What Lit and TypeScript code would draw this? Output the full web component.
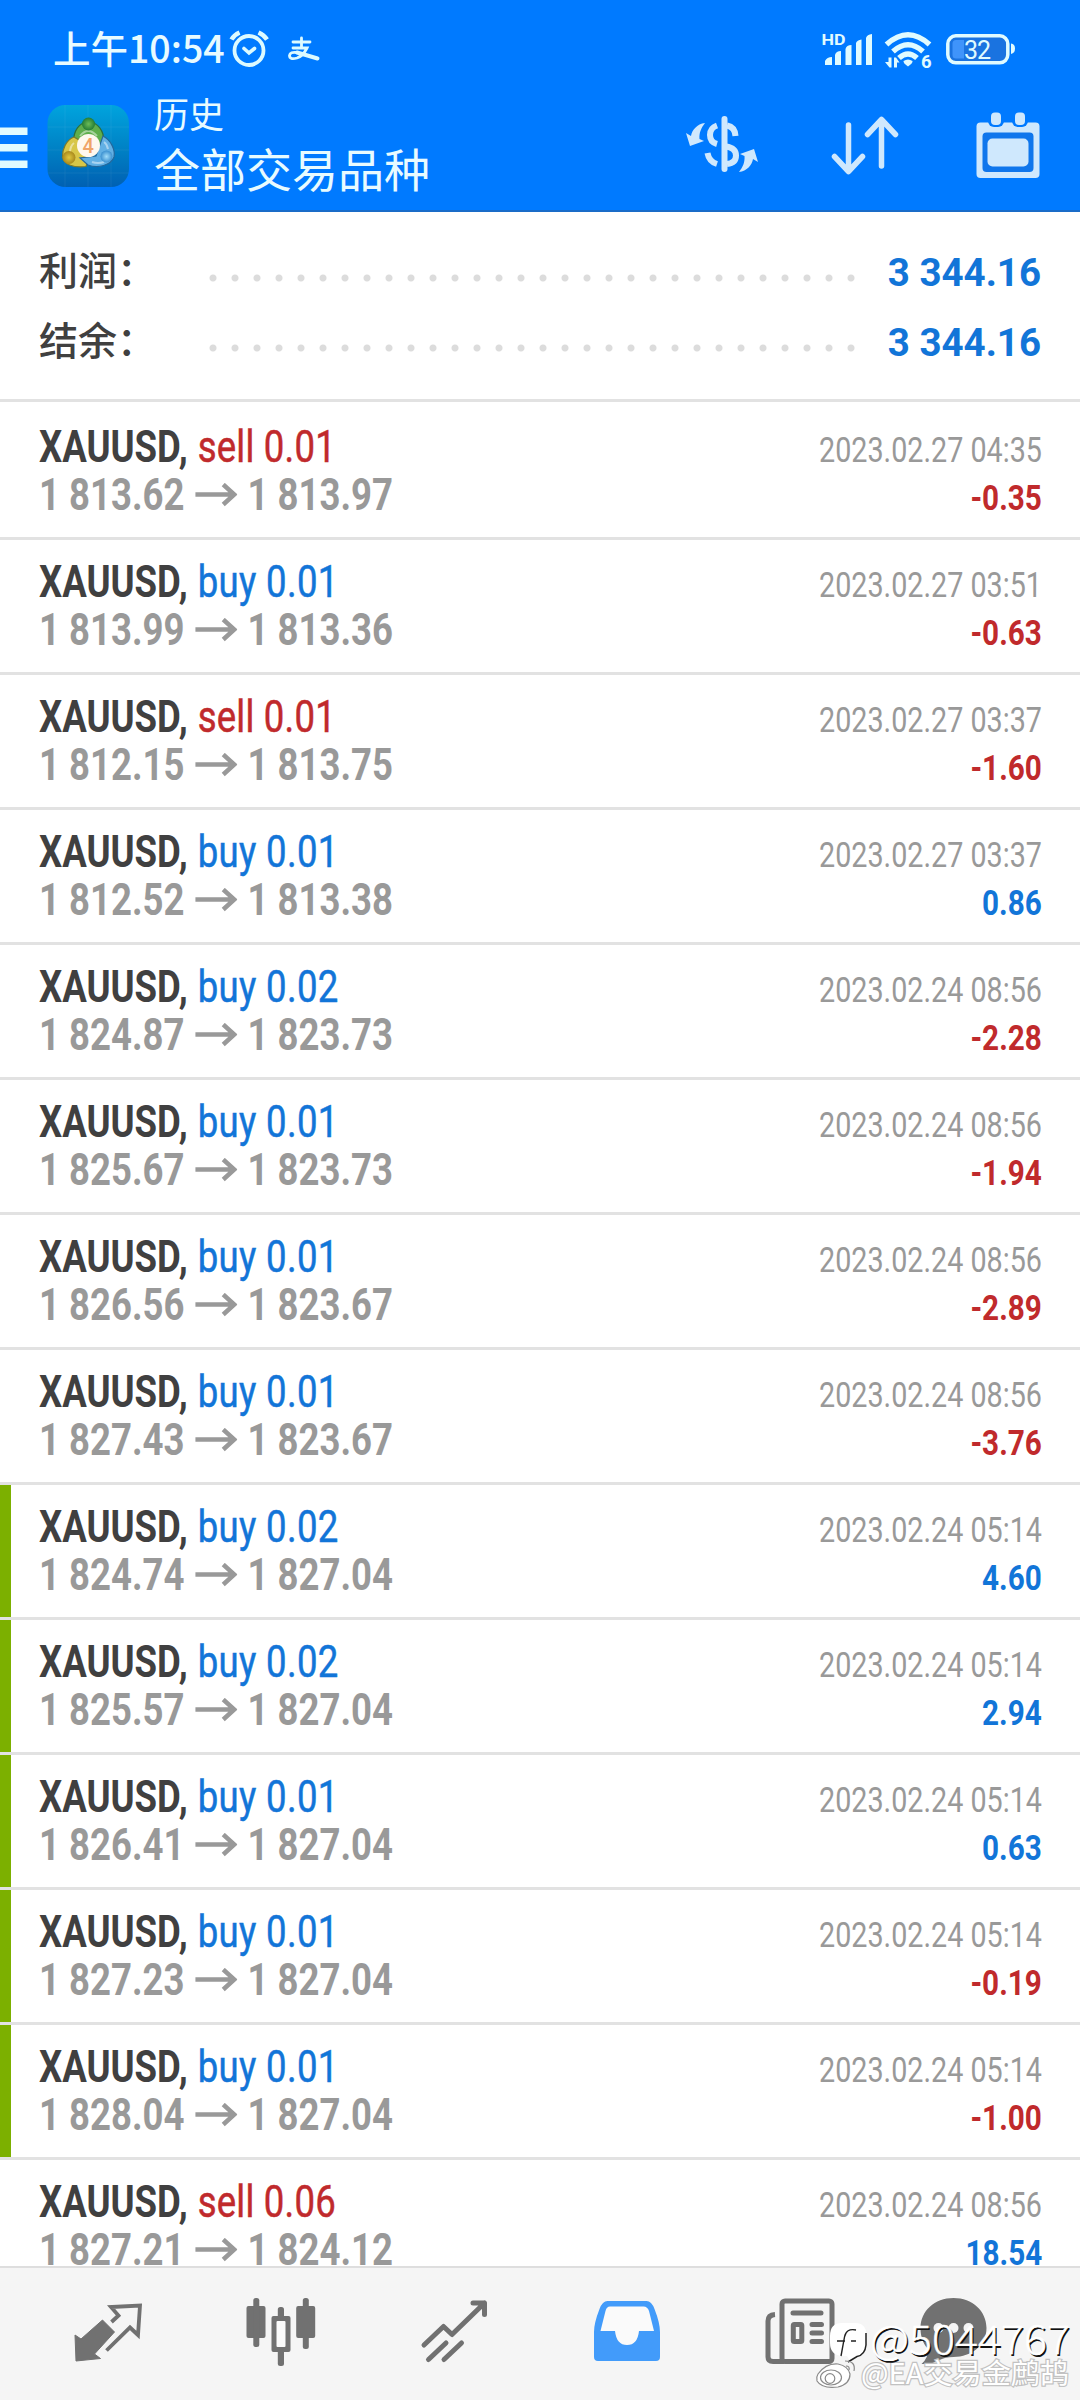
import { LitElement, html, css, svg } from "lit";
import { customElement, property } from "lit/decorators.js";

interface Deal {
  side: "buy" | "sell";
  volume: string;
  open: string;
  close: string;
  time: string;
  profit: string;
  marked?: boolean;
}

const deal = (
  side: "buy" | "sell", volume: string, open: string, close: string,
  time: string, profit: string, marked = false,
): Deal => ({ side, volume, open, close, time, profit, marked });

const DEALS: Deal[] = [
  deal("sell", "0.01", "1 813.62", "1 813.97", "2023.02.27 04:35", "-0.35"),
  deal("buy", "0.01", "1 813.99", "1 813.36", "2023.02.27 03:51", "-0.63"),
  deal("sell", "0.01", "1 812.15", "1 813.75", "2023.02.27 03:37", "-1.60"),
  deal("buy", "0.01", "1 812.52", "1 813.38", "2023.02.27 03:37", "0.86"),
  deal("buy", "0.02", "1 824.87", "1 823.73", "2023.02.24 08:56", "-2.28"),
  deal("buy", "0.01", "1 825.67", "1 823.73", "2023.02.24 08:56", "-1.94"),
  deal("buy", "0.01", "1 826.56", "1 823.67", "2023.02.24 08:56", "-2.89"),
  deal("buy", "0.01", "1 827.43", "1 823.67", "2023.02.24 08:56", "-3.76"),
  deal("buy", "0.02", "1 824.74", "1 827.04", "2023.02.24 05:14", "4.60", true),
  deal("buy", "0.02", "1 825.57", "1 827.04", "2023.02.24 05:14", "2.94", true),
  deal("buy", "0.01", "1 826.41", "1 827.04", "2023.02.24 05:14", "0.63", true),
  deal("buy", "0.01", "1 827.23", "1 827.04", "2023.02.24 05:14", "-0.19", true),
  deal("buy", "0.01", "1 828.04", "1 827.04", "2023.02.24 05:14", "-1.00", true),
  deal("sell", "0.06", "1 827.21", "1 824.12", "2023.02.24 08:56", "18.54"),
];

@customElement("deal-row")
export class DealRow extends LitElement {
  @property({ attribute: false }) deal!: Deal;

  static styles = css`
    :host { display: block; }
    .row {
      box-sizing: border-box; height: 135px; position: relative;
      border-bottom: 3px solid #e2e2e2;
      display: flex; justify-content: space-between;
      padding: 19px 38px 0 39px;
      font-family: Roboto, "Liberation Sans", sans-serif;
      white-space: nowrap;
    }
    .mark { position: absolute; left: 0; top: 0; width: 11px; height: 100%; background: #7cb000; }
    .left, .right { display: flex; flex-direction: column; }
    .left { transform: scaleX(0.84); transform-origin: 0 0; }
    .right { align-items: flex-end; padding-top: 2px; }
    .title { font-size: 43.5px; line-height: 48px; height: 48px; color: #404040; }
    .symbol { font-weight: 700; margin-right: 1px; }
    .buy, .sell { -webkit-text-stroke: 0.5px currentColor; }
    .sell { letter-spacing: 0.25px; }
    .buy { letter-spacing: 0.4px; }
    .buy { color: #1275d8; }
    .sell { color: #c02a2c; }
    .prices { font-size: 43.5px; line-height: 48px; height: 48px; font-weight: 700; color: #999; display: flex; align-items: center; }
    .arrow { width: 50px; height: 26px; margin: 0 12px 0 13px; }
    .time { font-size: 35.7px; line-height: 48px; height: 48px; color: #999; transform: scaleX(0.805); transform-origin: 100% 0; }
    .profit { font-size: 35.7px; line-height: 48px; height: 48px; font-weight: 700; transform: scaleX(0.832); transform-origin: 100% 0; }
    .gain { color: #1275d8; }
    .loss { color: #c02a2c; }
  `;

  render() {
    const d = this.deal;
    return html`
      <div class="row">
        ${d.marked ? html`<div class="mark"></div>` : null}
        <div class="left">
          <div class="title"><span class="symbol">XAUUSD,</span> <span class=${d.side}>${d.side} ${d.volume}</span></div>
          <div class="prices">
            <span>${d.open}</span>
            <svg class="arrow" viewBox="0 0 42 26" preserveAspectRatio="none" fill="none" stroke="#999" stroke-width="4.500">
              <path d="M0 11.500H39M28 1.500L39 11.500L28 21.500" />
            </svg>
            <span>${d.close}</span>
          </div>
        </div>
        <div class="right">
          <div class="time">${d.time}</div>
          <div class="profit ${d.profit.startsWith("-") ? "loss" : "gain"}">${d.profit}</div>
        </div>
      </div>
    `;
  }
}

@customElement("app-root")
export class AppRoot extends LitElement {
  static styles = css`
    :host { display: block; width: 1080px; height: 2400px; }
    .page {
      position: relative; width: 1080px; height: 2400px; overflow: hidden; background: #fff;
      display: flex; flex-direction: column;
      font-family: Roboto, "Noto Sans CJK SC", sans-serif;
    }
    .top { background: #007aff; height: 212px; flex: none; box-sizing: border-box; border-bottom: 2px solid #1a6cc8; color: #e8fbff; }
    .status { display: flex; align-items: center; height: 98px; padding: 0 64px 0 53px; }
    .clock { font-family: "Noto Sans CJK SC", sans-serif; font-weight: 500; font-size: 37.5px; line-height: 93px; height: 98px; width: 173px; white-space: nowrap; }
    .grow { flex: 1; }
    .bar { display: flex; height: 112px; }
    .titles { margin: -3px 0 0 23px; font-family: "Noto Sans CJK SC", sans-serif; white-space: nowrap; }
    .sub { font-size: 35px; line-height: 36px; }
    .main { font-size: 46px; line-height: 50px; margin-top: 11px; }
    svg { display: block; flex: none; }
    .summary { flex: none; height: 190px; box-sizing: border-box; border-bottom: 3px solid #e2e2e2; padding: 24px 39px 0; }
    .sum-row { display: flex; align-items: center; height: 70px; }
    .label { width: 163px; margin-top: -7px; font-family: "Noto Sans CJK SC", sans-serif; font-weight: 500; font-size: 39px; color: #404040; white-space: nowrap; }
    .dots { width: 660px; height: 8px; margin-top: 14px; background: radial-gradient(circle at 11px 4px, #dcdcdc 3px, transparent 4px) 0 0 / 22px 8px repeat-x; }
    .amount { flex: 1; margin-top: 2px; text-align: right; font-size: 38.5px; font-weight: 700; color: #1275d8; white-space: nowrap; }
    .list { flex: 1; min-height: 0; overflow: hidden; padding-top: 3px; }
    .nav { flex: none; box-sizing: border-box; height: 134px; border-top: 2px solid #dedede; background: #f5f5f5;
      display: grid; grid-template-columns: repeat(5, 173px) 133px; padding-left: 21px; justify-items: center; }
    .stamp { position: absolute; left: 810px; top: 2310px; }
  `;

  private statusIcons() {
    return svg`
      <g fill="#e0fbff">
        <text x="821.500" y="45" font-size="15.500" font-weight="700" textLength="24" lengthAdjust="spacingAndGlyphs">HD</text>
        <path d="M825 65V61Q827 57 832 57V65ZM835 65V55Q836 51 841 51V65ZM845.500 65V49Q846.500 45 851.500 45V65ZM856 65V43Q857 40 861.500 39.500V65ZM866 65V38Q867 34.500 872 34V65Z" />
        <g fill="none" stroke="#e0fbff" stroke-width="5.500">
          <path d="M886.500 44.500Q908 25 929.500 44.500M893 51.500Q908 38 923 51.500M899 58Q908 50 917 58" />
        </g>
        <path d="M903.500 61Q908 58 912.500 61Q913 63 908 66.500Q903 63 903.500 61Z" />
        <path d="M891.500 57.500V67.500H889.500L885 62H888.500V57.500ZM894 57.500H896L899.500 62.500H897V67.500H894Z" />
        <text x="921" y="67.500" font-size="18.500" font-weight="700">6</text>
        <rect x="947.800" y="35.800" width="60" height="27" rx="8" fill="#1a73e0" stroke="#e0fbff" stroke-width="3.500" />
        <path d="M956 40H964V58.500H956Q952.500 58.500 952.500 55V43.500Q952.500 40 956 40Z" fill="#3f94fb" />
        <path d="M1011 43.500Q1015 44 1015 48.500Q1015 53 1011 54Z" />
        <text x="964" y="58.500" font-size="25" textLength="27">32</text>
      </g>`;
  }

  render() {
    return html`
      <div class="page">
        <div class="top">
          <div class="status">
            <div class="clock">上午10:54</div>
            <svg width="100" height="98" viewBox="226 0 100 98" fill="none" stroke="#dcfaff" stroke-linecap="round">
              <circle cx="249" cy="50.500" r="14.500" stroke-width="3.800" />
              <path d="M244 48.500L249 53L254.500 48.500" stroke-width="3.600" />
              <path d="M231.500 39.500Q234 35 239.500 32.500M258.500 32.500Q264 35 267 39.500" stroke-width="4.500" stroke-linecap="butt" />
              <path d="M293 42H310M301.500 38V48M293 48H307Q303 56 297 58Q289.500 60 289.500 55.500Q290 51.500 297 52.500" stroke-width="2.800" />
              <path d="M297 52.500Q306 55 317.500 58.500" stroke-width="4" />
            </svg>
            <div class="grow"></div>
            <svg width="200" height="98" viewBox="816 0 200 98" font-family="Roboto, sans-serif">${this.statusIcons()}</svg>
          </div>
          <div class="bar">
            <svg width="131" height="112" viewBox="0 98 131 112">
              <defs>
                <linearGradient id="tile" x1="0" y1="0" x2="0" y2="1"><stop offset="0" stop-color="#00a4de" /><stop offset=".55" stop-color="#0080c4" /><stop offset="1" stop-color="#0060b2" /></linearGradient>
                <radialGradient id="g"><stop offset="0" stop-color="#6cbc58" /><stop offset="1" stop-color="#247c34" /></radialGradient>
                <radialGradient id="y"><stop offset="0" stop-color="#e0c840" /><stop offset="1" stop-color="#a8881c" /></radialGradient>
                <radialGradient id="b"><stop offset="0" stop-color="#a0dcfa" /><stop offset="1" stop-color="#3a90d0" /></radialGradient>
              </defs>
              <path d="M0 127.500H27.500V135H0ZM0 144H27.500V151.500H0ZM0 160.500H27.500V168H0Z" fill="#e0fbff" />
              <rect x="47.500" y="105" width="81.500" height="82" rx="18" fill="url(#tile)" />
              <path d="M65 105V187M88 105V187M111 105V187M48 127H129M48 150H129M48 173H129" stroke="#fff" stroke-opacity=".06" />
              <path d="M88.500 122C98 122 104 131 104 142L100 150H78L73.500 142C73.500 131 79 122 88.500 122Z" fill="#5fae4c" stroke="#2c6f3c" stroke-width="1.200" />
              <path d="M74 137C66 140 62 150 62.500 157C64 165 74 168 86 166.500L90 155L79 140Z" fill="#d8c648" stroke="#7c7a2c" stroke-width="1.200" />
              <path d="M103 136C111 140 115.500 150 114 157C111 165 98 169 88 165L80 158L96 156Z" fill="#62b0e4" stroke="#24689c" stroke-width="1.200" />
              <path d="M80 136Q88 126 97 136M70 153Q70 146 74 143M108 149Q107 144 104 142M92 162Q98 164 104 162" fill="none" stroke="#fff" stroke-opacity=".45" stroke-width="2" />
              <circle cx="88.500" cy="124" r="6.500" fill="url(#g)" />
              <circle cx="69" cy="157.500" r="6.500" fill="url(#y)" />
              <circle cx="106.500" cy="156.500" r="6" fill="url(#b)" />
              <circle cx="88.500" cy="145.500" r="11.500" fill="#fff8ee" />
              <text x="88.300" y="153" text-anchor="middle" font-size="20" font-weight="500" font-family="Roboto, sans-serif" fill="#f0a468">4</text>
            </svg>
            <div class="titles">
              <div class="sub">历史</div>
              <div class="main">全部交易品种</div>
            </div>
            <div class="grow"></div>
            <svg width="400" height="112" viewBox="680 98 400 112" fill="none" stroke="#cfe8fd" stroke-width="6">
              <path d="M724.500 119V169" stroke-linecap="round" />
              <path d="M717 125.500Q710 128 710 135Q710 142 717 144M727 125.500Q735 127 735.500 136M726 146.500Q736 148 736 155.500Q736 163 727 164M707.500 153Q709 161.500 717 164" />
              <path d="M705 123C697 124 692 130 691 136L686 133L690 146L704 141L699.500 139C699 133 701 128 705 123Z" fill="#cfe8fd" stroke="none" />
              <path d="M705 123C697 124 692 130 691 136L686 133L690 146L704 141L699.500 139C699 133 701 128 705 123Z" transform="rotate(180 722 147.500)" fill="#cfe8fd" stroke="none" />
              <g stroke-width="5.500" stroke-linecap="round" stroke-linejoin="round">
                <path d="M848.500 125V171M834.500 156.500L848.500 171.500L862.500 156.500M881.500 166V120M867.500 134.500L881.500 119.500L895.500 134.500" />
              </g>
              <g stroke="none" fill="#cfe8fd">
                <rect x="976.500" y="122.500" width="63" height="55.500" rx="4" />
                <rect x="982.500" y="132.500" width="51" height="39.500" rx="4" fill="#0f76ec" />
                <rect x="987.500" y="138.500" width="41" height="28" rx="5" />
                <rect x="988" y="110" width="16" height="17" rx="6" fill="#007aff" />
                <rect x="1012" y="110" width="16" height="17" rx="6" fill="#007aff" />
                <rect x="991" y="112.500" width="10" height="12.500" rx="4" />
                <rect x="1015" y="112.500" width="10" height="12.500" rx="4" />
              </g>
            </svg>
          </div>
        </div>
        <div class="summary">
          <div class="sum-row"><div class="label">利润：</div><div class="dots"></div><div class="amount">3 344.16</div></div>
          <div class="sum-row"><div class="label">结余：</div><div class="dots"></div><div class="amount">3 344.16</div></div>
        </div>
        <div class="list">${DEALS.map((d) => html`<deal-row .deal=${d}></deal-row>`)}</div>
        <div class="nav">
          <svg width="80" height="132" viewBox="68 2268 80 132">
            <path d="M75 2335L81 2339L102.500 2320L114.500 2332L94.500 2354L100.500 2358.500L76 2361Z" fill="#717171" stroke="#717171" stroke-width="1" />
            <path d="M111.500 2322L118.500 2315.500L111 2307L140 2305.500L138 2335L130 2327.500L106.500 2350.500" fill="none" stroke="#717171" stroke-width="3.800" />
          </svg>
          <svg width="80" height="132" viewBox="241 2268 80 132" fill="#717171">
            <rect x="246.500" y="2306" width="19" height="32" rx="2" /><rect x="253.300" y="2298" width="6" height="49" rx="2.500" />
            <rect x="277.800" y="2307" width="6.200" height="59" rx="2.500" /><rect x="271.500" y="2316" width="19" height="36" rx="2" /><rect x="276.500" y="2321" width="9" height="26" rx="1" fill="#fafafa" />
            <rect x="296.200" y="2306" width="19" height="32" rx="2" /><rect x="302.800" y="2298" width="6" height="51" rx="2.500" />
          </svg>
          <svg width="80" height="132" viewBox="414 2268 80 132" fill="none" stroke="#717171" stroke-width="5" stroke-linecap="round" stroke-linejoin="round">
            <path d="M424 2345L443.500 2326.500L452 2334.500L484.500 2303M473 2303H484.500V2314.500M446 2343L428.500 2359.500M461.500 2343L444 2359.500" />
          </svg>
          <svg width="80" height="132" viewBox="587.500 2268 80 132">
            <path d="M608 2301H647Q652 2301 655 2309Q660.500 2323 660.500 2332V2357Q660.500 2361 656.500 2361H598.500Q594.500 2361 594.500 2357V2332Q594.500 2323 600 2309Q603 2301 608 2301Z" fill="#429bfa" />
            <path d="M610.500 2306.500H644Q648 2306.500 649.500 2311L654.500 2331H639.500Q638 2345 627.500 2345Q617 2345 615.500 2331H601L606 2311Q607 2306.500 610.500 2306.500Z" fill="#fafafa" />
          </svg>
          <svg width="80" height="132" viewBox="761 2268 80 132" fill="none" stroke="#717171" stroke-width="5">
            <rect x="783" y="2301" width="50" height="60.500" rx="3" />
            <path d="M776 2314.500Q769 2315 769 2321V2357Q769 2361.500 774 2361.500H785" />
            <path d="M794 2313H822M813 2324.500H822.500M813 2333H822.500M813 2341.500H822.500" stroke-linecap="round" />
            <rect x="794.300" y="2324.500" width="8.500" height="17" rx="1" />
          </svg>
          <svg width="80" height="132" viewBox="912.500 2268 80 132">
            <path d="M953 2298C972 2298 986 2311 986 2328C986 2345 971 2357 953 2357C947 2357 943 2358 939 2360C934 2363 928 2364.500 921 2364Q928 2358 927.500 2349C922 2343 920 2336 920 2328C920 2311 934 2298 953 2298Z" fill="#717171" />
            <g fill="#f5f5f5"><circle cx="938" cy="2328" r="5" /><circle cx="953" cy="2328" r="5" /><circle cx="968" cy="2328" r="5" /></g>
          </svg>
        </div>
        <svg class="stamp" width="270" height="90" viewBox="810 2310 270 90">
          <path d="M842 2323H855Q866.500 2323 866.500 2336V2344Q866.500 2356 857 2356L850 2361L847 2356H842Q830 2355 830 2343V2336Q830 2323 842 2323Z" fill="#fff" />
          <path d="M866 2333V2345Q865 2355 857 2356.500L848 2362" fill="none" stroke="#222" stroke-width="1.500" />
          <path d="M856 2330Q846 2328 844.500 2337L841 2356M837 2341H845M851 2341H856" fill="none" stroke="#222" stroke-width="1.400" />
          <g fill="#fff" stroke="#8a8a8a" stroke-width="1.200">
            <path d="M818 2374Q826 2363 838 2364Q848 2366 850 2374Q850 2384 838 2387Q822 2389 817 2381Q816 2377 818 2374Z" />
            <ellipse cx="831" cy="2377.500" rx="10.500" ry="7.500" /><circle cx="830" cy="2378.500" r="4.800" />
            <path d="M845 2361Q856 2361 854 2371M846 2366Q850 2366 849 2370" fill="none" />
          </g>
          <g font-family="'Noto Sans CJK SC', sans-serif">
            <text x="861" y="2383.500" font-size="28.500" textLength="208" lengthAdjust="spacingAndGlyphs" fill="#fff" stroke="#c2c2c2" stroke-width="2.400" paint-order="stroke">@EA交易金鹧鸪</text>
            <text x="871.500" y="2355.500" font-size="40" font-weight="300" textLength="200" lengthAdjust="spacingAndGlyphs" fill="#111">@5044767</text>
            <text x="870" y="2354.300" font-size="40" font-weight="300" textLength="200" lengthAdjust="spacingAndGlyphs" fill="#fff" stroke="#fff" stroke-width=".4">@5044767</text>
          </g>
        </svg>
      </div>
    `;
  }
}
